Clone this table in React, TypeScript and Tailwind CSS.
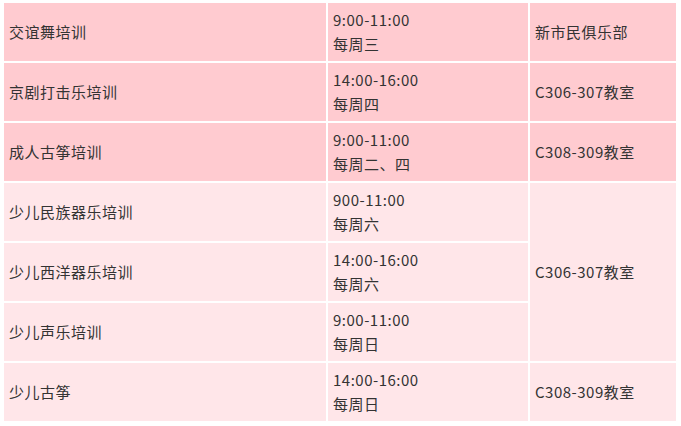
const rows = [
  { name: "交谊舞培训", time: "9:00-11:00", day: "每周三", place: "新市民俱乐部", dark: true },
  { name: "京剧打击乐培训", time: "14:00-16:00", day: "每周四", place: "C306-307教室", dark: true },
  { name: "成人古筝培训", time: "9:00-11:00", day: "每周二、四", place: "C308-309教室", dark: true },
  { name: "少儿民族器乐培训", time: "900-11:00", day: "每周六", place: "C306-307教室", span: 3 },
  { name: "少儿西洋器乐培训", time: "14:00-16:00", day: "每周六", skip: true },
  { name: "少儿声乐培训", time: "9:00-11:00", day: "每周日", skip: true },
  { name: "少儿古筝", time: "14:00-16:00", day: "每周日", place: "C308-309教室" },
]

export default function App() {
  return (
    <div className="h-[426px] w-[681px] bg-white pl-[2px] pt-[1px] font-['Noto_Sans_CJK_SC','Microsoft_YaHei',sans-serif] text-[15px] tracking-[0.5px] text-[#333]">
      <table className="border-separate border-spacing-[2px]">
        <tbody>
          {rows.map((r, i) => {
            const bg = r.dark ? "bg-[#ffcbd0]" : "bg-[#ffe6e9]"
            return (
              <tr key={i}>
                <td className={`h-[58px] w-[322px] px-[5px] align-middle leading-6 ${bg}`}>{r.name}</td>
                <td className={`h-[58px] w-[200px] px-[5px] align-middle leading-6 ${bg}`}>
                  <div>{r.time}</div>
                  <div>{r.day}</div>
                </td>
                {!r.skip && (
                  <td rowSpan={r.span ?? 1} className={`w-[146px] px-[5px] align-middle leading-6 ${bg}`}>{r.place}</td>
                )}
              </tr>
            )
          })}
        </tbody>
      </table>
    </div>
  )
}
